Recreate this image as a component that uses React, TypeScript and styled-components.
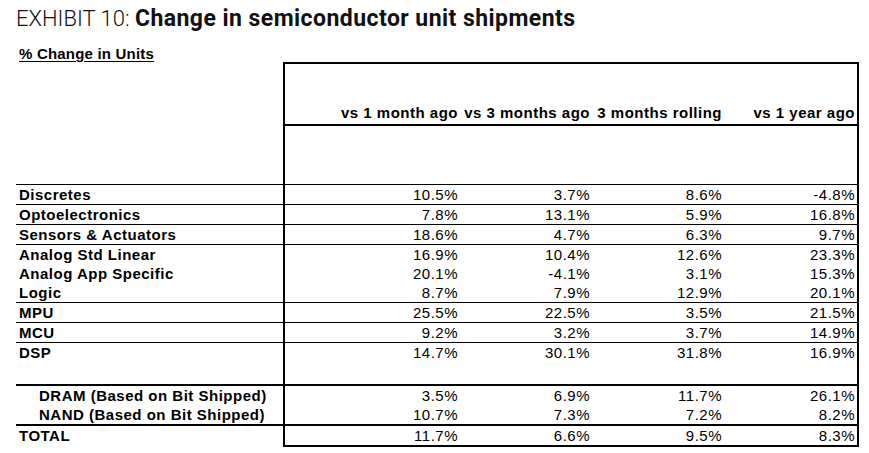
import { FC } from 'react'
import styled, { createGlobalStyle } from 'styled-components'

type Line = 'none' | 'thin' | 'thick'

type Row = {
  label: string
  values: string[]
  top: Line
  indent?: boolean
  tall?: boolean
  last?: boolean
}

const headers = ['vs 1 month ago', 'vs 3 months ago', '3 months rolling', 'vs 1 year ago']

const rows: Row[] = [
  { label: 'Discretes', values: ['10.5%', '3.7%', '8.6%', '-4.8%'], top: 'thin' },
  { label: 'Optoelectronics', values: ['7.8%', '13.1%', '5.9%', '16.8%'], top: 'thin' },
  { label: 'Sensors & Actuators', values: ['18.6%', '4.7%', '6.3%', '9.7%'], top: 'thin' },
  { label: 'Analog Std Linear', values: ['16.9%', '10.4%', '12.6%', '23.3%'], top: 'thin' },
  { label: 'Analog App Specific', values: ['20.1%', '-4.1%', '3.1%', '15.3%'], top: 'none' },
  { label: 'Logic', values: ['8.7%', '7.9%', '12.9%', '20.1%'], top: 'none' },
  { label: 'MPU', values: ['25.5%', '22.5%', '3.5%', '21.5%'], top: 'thin' },
  { label: 'MCU', values: ['9.2%', '3.2%', '3.7%', '14.9%'], top: 'thin' },
  { label: 'DSP', values: ['14.7%', '30.1%', '31.8%', '16.9%'], top: 'thin', tall: true },
  { label: 'DRAM (Based on Bit Shipped)', values: ['3.5%', '6.9%', '11.7%', '26.1%'], top: 'thick', indent: true },
  { label: 'NAND (Based on Bit Shipped)', values: ['10.7%', '7.3%', '7.2%', '8.2%'], top: 'none', indent: true },
  { label: 'TOTAL', values: ['11.7%', '6.6%', '9.5%', '8.3%'], top: 'thick', last: true },
]

const lineCss = (l: Line) => (l === 'thick' ? '2px solid #000' : l === 'thin' ? '1px solid #000' : 'none')

const App: FC = () => (
  <Page>
    <GlobalStyle />
    <Title>
      <Exhibit>EXHIBIT 10: </Exhibit>
      <Heading>Change in semiconductor unit shipments</Heading>
    </Title>
    <Subtitle>% Change in Units</Subtitle>
    <Table>
      <colgroup>
        <col style={{ width: 268 }} />
        <col style={{ width: 176 }} />
        <col style={{ width: 132 }} />
        <col style={{ width: 132 }} />
        <col style={{ width: 134 }} />
      </colgroup>
      <tbody>
        <tr>
          <LabelCell $top="none" />
          {headers.map((h, i) => (
            <HeadCell key={h} $first={i === 0} $lastCol={i === headers.length - 1}>
              {h}
            </HeadCell>
          ))}
        </tr>
        <tr>
          <SpacerCell />
          {headers.map((h, i) => (
            <ValueCell key={h} $top="none" $first={i === 0} $lastCol={i === headers.length - 1} />
          ))}
        </tr>
        {rows.map((r) => (
          <tr key={r.label}>
            <LabelCell $top={r.top} $indent={r.indent} $tall={r.tall}>
              {r.label}
            </LabelCell>
            {r.values.map((v, i) => (
              <ValueCell
                key={i}
                $top={r.top}
                $first={i === 0}
                $lastCol={i === r.values.length - 1}
                $bottom={r.last}
                $tall={r.tall}
              >
                {v}
              </ValueCell>
            ))}
          </tr>
        ))}
      </tbody>
    </Table>
  </Page>
)

const GlobalStyle = createGlobalStyle`
  body {
    margin: 0;
    background: #fff;
    color: #000;
    font-family: "Liberation Sans", Arial, sans-serif;
  }
`

const Page = styled.div`
  width: 869px;
  height: 453px;
  padding: 6px 0 0 16px;
  box-sizing: border-box;
`

const Title = styled.div`
  font-family: Roboto, "Liberation Sans", sans-serif;
  font-size: 22px;
  line-height: 26px;
  color: #111;
  white-space: nowrap;
`

const Exhibit = styled.span`
  font-weight: 300;
`

const Heading = styled.span`
  font-size: 23px;
  font-weight: 700;
  letter-spacing: 0.45px;
`

const Subtitle = styled.div`
  margin: 13px 0 0 3px;
  font-size: 15px;
  font-weight: 700;
  line-height: 17px;
  letter-spacing: 0.2px;
  text-decoration: underline;
  text-underline-offset: 2px;
`

const Table = styled.table`
  margin-top: 0;
  width: 842px;
  table-layout: fixed;
  border-collapse: collapse;
  font-size: 15px;
  letter-spacing: 0.5px;

  td {
    padding: 0;
    white-space: nowrap;
  }
`

const LabelCell = styled.td<{ $top: Line; $indent?: boolean; $tall?: boolean }>`
  border-top: ${(p) => lineCss(p.$top)};
  height: ${(p) => (p.$tall ? 41 : 19)}px;
  padding-left: ${(p) => (p.$indent ? 23 : 3)}px !important;
  vertical-align: top;
  font-weight: 700;
  line-height: 19px;
`

const SpacerCell = styled.td`
  height: 59px;
`

const HeadCell = styled.td<{ $first?: boolean; $lastCol?: boolean }>`
  height: 58px;
  border-top: 2px solid #000;
  border-bottom: 2px solid #000;
  border-left: ${(p) => (p.$first ? '2px solid #000' : 'none')};
  border-right: ${(p) => (p.$lastCol ? '2px solid #000' : 'none')};
  vertical-align: bottom;
  text-align: right;
  padding: 0 2px 2px 0 !important;
  font-weight: 700;
  line-height: 18px;
`

const ValueCell = styled.td<{ $top: Line; $first?: boolean; $lastCol?: boolean; $bottom?: boolean; $tall?: boolean }>`
  border-top: ${(p) => lineCss(p.$top)};
  border-bottom: ${(p) => (p.$bottom ? '2px solid #000' : 'none')};
  border-left: ${(p) => (p.$first ? '2px solid #000' : 'none')};
  border-right: ${(p) => (p.$lastCol ? '2px solid #000' : 'none')};
  height: ${(p) => (p.$tall ? 41 : 19)}px;
  vertical-align: top;
  text-align: right;
  padding-right: 2px !important;
  line-height: 19px;
`

export default App
